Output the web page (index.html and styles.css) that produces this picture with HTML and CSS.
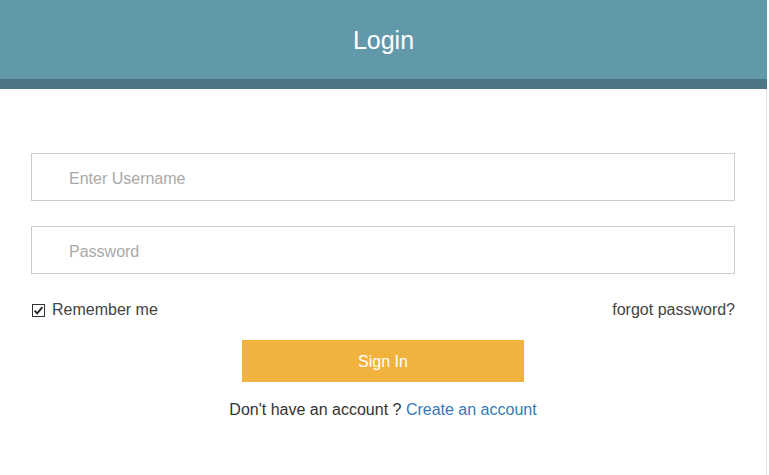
FILE: index.html
```html
<!DOCTYPE html>
<html>
<head>
<meta charset="utf-8">
<link rel="stylesheet" href="styles.css">
</head>
<body>
<div class="card">
  <header class="header"><h1 class="title">Login</h1></header>
  <form class="form">
    <input class="field" type="text" placeholder="Enter Username">
    <input class="field" type="password" placeholder="Password">
    <div class="options">
      <label class="remember">
        <span class="check"><svg width="13" height="13" viewBox="0 0 13 13"><rect x="0.5" y="0.5" width="12" height="12" fill="#fff" stroke="#333"/><path d="M2.6 6.6 L5.2 9.3 L10.4 3.2" fill="none" stroke="#222" stroke-width="1.8"/></svg></span>
        Remember me
      </label>
      <a class="forgot">forgot password?</a>
    </div>
    <button class="signin" type="button">Sign In</button>
    <p class="signup">Don't have an account ? <a class="link">Create an account</a></p>
  </form>
</div>
</body>
</html>
```
FILE: styles.css
```css
* { box-sizing: border-box; }
html, body { margin: 0; padding: 0; background: #fff; }
body { font-family: "Liberation Sans", Arial, sans-serif; font-size: 16px; color: #444; }
.card { width: 767px; height: 475px; border-right: 1px solid #e2e2e2; }
.header {
  height: 89px;
  background: #6299aa;
  border-bottom: 10px solid #4c7683;
  display: flex; align-items: center; justify-content: center;
  margin-right: -1px;
}
.title { margin: 0; font-weight: normal; font-size: 25px; color: #fff; line-height: 28px; padding-top: 1px; }
.form { padding: 64px 31px 0 31px; display: flex; flex-direction: column; }
.field {
  height: 48px; width: 100%;
  border: 1px solid #cccccc; border-radius: 0;
  padding: 4px 0 0 37px;
  font-family: inherit; font-size: 16px; color: #444;
  outline: none; background: #fff;
}
.field + .field { margin-top: 25px; }
.field::placeholder { color: #a9a9a9; }
.options { margin-top: 26px; display: flex; justify-content: space-between; align-items: center; line-height: 20px; color: #444; }
.remember { display: flex; align-items: center; }
.check { display: inline-flex; margin: 0 7px 0 1px; }
.check svg { display: block; }
.forgot { color: #444; }
.signin {
  align-self: center; margin-top: 20px;
  width: 282px; height: 42px;
  padding: 2px 0 0;
  background: #f2b23e; border: none; color: #fff;
  font-family: inherit; font-size: 16px;
}
.signup { margin: 18px 0 0; text-align: center; line-height: 20px; color: #333; }
.link { color: #337ab7; }
```
